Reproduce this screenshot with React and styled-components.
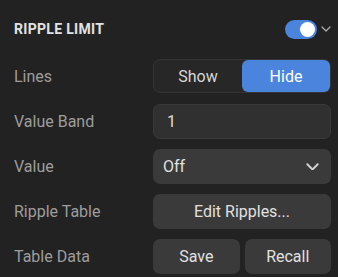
import { useState } from "react";
import styled, { createGlobalStyle } from "styled-components";

const Global = createGlobalStyle`
  html, body { margin: 0; background: #222222; }
  * { box-sizing: border-box; }
`;

const Panel = styled.div`
  width: 338px;
  height: 277px;
  background: #222222;
  font-family: Roboto, "Noto Sans", sans-serif;
  padding: 0 7px 0 14px;
`;

const Header = styled.div`
  display: flex;
  align-items: center;
  justify-content: space-between;
  height: 57px;
  padding-top: 1px;
`;

const Title = styled.div`
  color: #e2e2e2;
  font-size: 14px;
  font-weight: 700;
  letter-spacing: 0.3px;
`;

const HeaderRight = styled.div`
  display: flex;
  align-items: center;
  gap: 4px;
`;

const Switch = styled.button`
  width: 32px;
  height: 19px;
  border-radius: 10px;
  border: none;
  background: ${({ $on }) => ($on ? "#4a84dc" : "#555")};
  display: flex;
  align-items: center;
  justify-content: ${({ $on }) => ($on ? "flex-end" : "flex-start")};
  padding: 0 2px;
  cursor: pointer;
`;

const Knob = styled.span`
  width: 15px;
  height: 15px;
  border-radius: 50%;
  background: #fff;
`;

const Rows = styled.div`
  display: flex;
  flex-direction: column;
  gap: 11px;
  padding-top: 2px;
`;

const Row = styled.div`
  display: grid;
  grid-template-columns: 139px 178px;
  align-items: center;
  height: 34px;
`;

const Label = styled.div`
  color: #9d9d9d;
  font-size: 16px;
`;

const Segment = styled.div`
  display: flex;
  height: 34px;
  border: 1px solid #343434;
  background: #272727;
  border-radius: 7px;
`;

const SegBtn = styled.button`
  flex: 1;
  border: none;
  border-radius: 6px;
  font-family: inherit;
  font-size: 16px;
  color: ${({ $active }) => ($active ? "#ffffff" : "#d6d6d6")};
  background: ${({ $active }) => ($active ? "#4a84dc" : "transparent")};
  cursor: pointer;
`;

const Input = styled.input`
  height: 35px;
  width: 100%;
  border: 1px solid #393939;
  background: #303030;
  border-radius: 7px;
  color: #dcdcdc;
  font-family: inherit;
  font-size: 16px;
  padding: 0 13px;
  outline: none;
`;

const Select = styled.div`
  height: 35px;
  display: flex;
  align-items: center;
  justify-content: space-between;
  background: #3a3a3a;
  border-radius: 7px;
  color: #e0e0e0;
  font-size: 16px;
  padding: 0 12px 0 10px;
`;

const Button = styled.button`
  height: 35px;
  width: 100%;
  border: none;
  background: #3a3a3a;
  border-radius: 7px;
  color: #e0e0e0;
  font-family: inherit;
  font-size: 16px;
  cursor: pointer;
`;

const Pair = styled.div`
  display: grid;
  grid-template-columns: 1fr 1fr;
  gap: 5px;
`;

const Chevron = ({ size = 10, color = "#bbb", width = 1.6 }) => (
  <svg width={size} height={size * 0.6} viewBox="0 0 10 6" fill="none">
    <path d="M1 1l4 4 4-4" stroke={color} strokeWidth={width} strokeLinecap="round" strokeLinejoin="round" />
  </svg>
);

export default function App() {
  const [on, setOn] = useState(true);
  const [lines, setLines] = useState("hide");
  const [band, setBand] = useState("1");

  return (
    <Panel>
      <Global />
      <Header>
        <Title>RIPPLE LIMIT</Title>
        <HeaderRight>
          <Switch $on={on} onClick={() => setOn((v) => !v)}>
            <Knob />
          </Switch>
          <Chevron size={10} color="#aaa" width={1.3} />
        </HeaderRight>
      </Header>
      <Rows>
        <Row>
          <Label>Lines</Label>
          <Segment>
            <SegBtn $active={lines === "show"} onClick={() => setLines("show")}>Show</SegBtn>
            <SegBtn $active={lines === "hide"} onClick={() => setLines("hide")}>Hide</SegBtn>
          </Segment>
        </Row>
        <Row>
          <Label>Value Band</Label>
          <Input value={band} onChange={(e) => setBand(e.target.value)} />
        </Row>
        <Row>
          <Label>Value</Label>
          <Select>
            <span>Off</span>
            <Chevron size={13} color="#d0d0d0" width={1.5} />
          </Select>
        </Row>
        <Row>
          <Label>Ripple Table</Label>
          <Button>Edit Ripples...</Button>
        </Row>
        <Row>
          <Label>Table Data</Label>
          <Pair>
            <Button>Save</Button>
            <Button>Recall</Button>
          </Pair>
        </Row>
      </Rows>
    </Panel>
  );
}
